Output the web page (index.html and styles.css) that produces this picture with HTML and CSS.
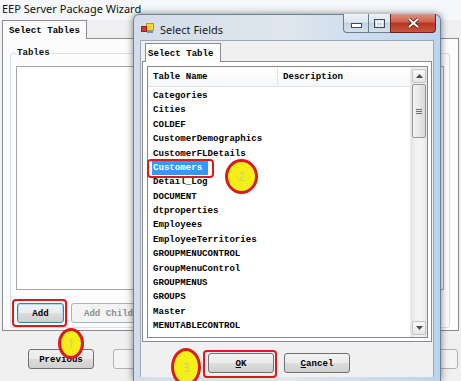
FILE: index.html
```html
<!DOCTYPE html>
<html lang="en">
<head>
    <meta charset="UTF-8">
    <meta name="viewport" content="width=device-width, initial-scale=1.0">
    <title>EEP Server Package Wizard</title>
    <link rel="stylesheet" href="styles.css">
</head>
<body>

    <div class="desktop">

        <!-- wizard window (behind) -->
        <div class="wizard">
            <div class="wizard-title">EEP Server Package Wizard</div>

            <div class="tab-strip wizard-tabs">
                <span class="tab">Select Tables</span>
            </div>
            <div class="tab-page wizard-page">
                <fieldset class="group">
                    <legend>Tables</legend>
                    <div class="listbox"></div>
                    <div class="group-buttons">
                        <button class="btn btn-default btn-add">Add</button>
                        <button class="btn btn-child" disabled>Add Child</button>
                    </div>
                </fieldset>
            </div>

            <div class="wizard-footer">
                <button class="btn btn-nav">Previous</button>
                <button class="btn btn-nav" disabled>Next</button>
                <button class="btn btn-nav btn-finish" disabled>Finish</button>
            </div>
        </div>

        <!-- Select Fields dialog -->
        <div class="dialog">
            <div class="dialog-titlebar">
                <svg class="dialog-icon" width="13" height="10" viewBox="0 0 13 10">
                    <rect x="5.5" y="0.5" width="7" height="7" fill="#f4d63c" stroke="#b89a22"/>
                    <rect x="0.5" y="3.5" width="5" height="5" fill="#d8362c" stroke="#9c2018"/>
                    <rect x="6" y="8" width="6" height="2" fill="#6d90c6"/>
                </svg>
                <span class="dialog-title">Select Fields</span>
                <div class="caption-buttons">
                    <span class="cap cap-min">
                        <svg width="11" height="5" viewBox="0 0 11 5"><rect x="0.5" y="0.5" width="10" height="4" fill="#fff" stroke="#3b4a5e"/></svg>
                    </span>
                    <span class="cap cap-max">
                        <svg width="11" height="9" viewBox="0 0 11 9"><rect x="0.5" y="0.5" width="10" height="8" fill="none" stroke="#3b4a5e"/><rect x="2.5" y="3" width="6" height="4" fill="none" stroke="#fff"/></svg>
                    </span>
                    <span class="cap cap-close">
                        <svg width="13" height="10" viewBox="0 0 13 10"><path d="M2 1 L11 9 M11 1 L2 9" stroke="#3a1a14" stroke-width="3.4"/><path d="M2 1 L11 9 M11 1 L2 9" stroke="#fff" stroke-width="2"/></svg>
                    </span>
                </div>
            </div>

            <div class="dialog-client">
                <div class="tab-strip dialog-tabs">
                    <span class="tab">Select Table</span>
                </div>
                <div class="tab-page dialog-page">
                    <div class="listview">
                        <div class="lv-main">
                            <div class="lv-header">
                                <span class="col col-name">Table Name</span>
                                <span class="col">Description</span>
                            </div>
                            <ul class="lv-rows">
                                <li>Categories</li>
                                <li>Cities</li>
                                <li>COLDEF</li>
                                <li>CustomerDemographics</li>
                                <li>CustomerFLDetails</li>
                                <li><span class="selected">Customers</span></li>
                                <li>Detail_Log</li>
                                <li>DOCUMENT</li>
                                <li>dtproperties</li>
                                <li>Employees</li>
                                <li>EmployeeTerritories</li>
                                <li>GROUPMENUCONTROL</li>
                                <li>GroupMenuControl</li>
                                <li>GROUPMENUS</li>
                                <li>GROUPS</li>
                                <li>Master</li>
                                <li>MENUTABLECONTROL</li>
                            </ul>
                        </div>
                        <div class="scrollbar">
                            <span class="sb-btn">
                                <svg width="7" height="4" viewBox="0 0 7 4"><path d="M0 4 L3.5 0 L7 4 Z" fill="#4d4d4d"/></svg>
                            </span>
                            <span class="sb-thumb"><i></i><i></i><i></i></span>
                            <span class="sb-btn sb-down">
                                <svg width="7" height="4" viewBox="0 0 7 4"><path d="M0 0 L3.5 4 L7 0 Z" fill="#4d4d4d"/></svg>
                            </span>
                        </div>
                    </div>
                </div>
                <div class="dialog-buttons">
                    <button class="btn btn-dlg"><u>O</u>K</button>
                    <button class="btn btn-dlg"><u>C</u>ancel</button>
                </div>
            </div>
        </div>

        <!-- annotations -->
        <span class="mark-box box-customers"></span>
        <span class="mark-box box-add"></span>
        <span class="mark-box box-ok"></span>
        <span class="mark mark-1">1</span>
        <span class="mark mark-2">2</span>
        <span class="mark mark-3">3</span>

    </div>

</body>
</html>
```

FILE: styles.css
```css
* {
    box-sizing: border-box;
}
body {
    margin: 0;
    font-family: "Liberation Mono", "Courier New", monospace;
    font-size: 9.1px;
    font-weight: bold;
    color: #000;
}
.desktop {
    position: relative;
    width: 461px;
    height: 381px;
    overflow: hidden;
    background-color: #f0f0f0;
}

/* wizard window */
.wizard {
    display: flex;
    flex-direction: column;
    height: 381px;
    padding: 0 2px;
}
.wizard-title {
    height: 20px;
    margin: 0 -2px;
    padding-left: 2px;
    font: 11px "Noto Sans", sans-serif;
    line-height: 17px;
    color: #111;
    background-color: #f5f7fa;
}
.tab-strip {
    display: flex;
}
.tab {
    position: relative;
    z-index: 1;
    margin-bottom: -1px;
    border: 1px solid #898c95;
    border-bottom: none;
    background-color: #fcfcfc;
    white-space: nowrap;
}
.wizard-tabs .tab {
    height: 19px;
    padding: 2px 6px 0;
    line-height: 15px;
}
.tab-page {
    border: 1px solid #898c95;
    background-color: #fcfcfc;
}
.wizard-page {
    height: 293px;
    padding: 8px 8px 0 7px;
}
.group {
    margin: 0;
    padding: 0 5px 4px;
    min-width: 0;
    border: 1px solid #d5dfe5;
    border-radius: 3px;
}
.group legend {
    padding: 0 1px;
    line-height: 12px;
    color: #111;
}
.listbox {
    height: 224px;
    margin-top: 7px;
    border: 1px solid #a5a7ad;
    background-color: #fff;
}
.group-buttons {
    display: flex;
    gap: 7px;
    margin-top: 13px;
    padding-left: 1px;
}
.btn {
    height: 20px;
    padding: 0;
    border: 1px solid #707070;
    border-radius: 3px;
    background: linear-gradient(#f2f2f2 0%, #ebebeb 49%, #dddddd 50%, #cfcfcf 100%);
    font: inherit;
    color: #000;
}
.btn:disabled {
    border-color: #adb2b5;
    background: #f4f4f4;
    color: #8e8e8e;
}
.btn-default {
    border-color: #3c7fb1;
    box-shadow: inset 0 0 0 1px #a9dcf6;
}
.btn-add {
    width: 47px;
}
.btn-child {
    width: 75px;
}
.wizard-footer {
    display: flex;
    gap: 19px;
    padding: 18px 1px 0 26px;
}
.btn-nav {
    width: 66px;
}
.btn-finish {
    margin-left: auto;
}

/* dialog */
.dialog {
    position: absolute;
    left: 133px;
    top: 14px;
    width: 308px;
    height: 367px;
    display: flex;
    flex-direction: column;
    padding: 0 6px 4px;
    border: 1px solid #6f8197;
    border-bottom: none;
    border-radius: 6px 6px 0 0;
    background: linear-gradient(to right, #d3dde9 0%, #dfe6ee 50%, #bcd3ee 100%);
    box-shadow: 0 0 7px rgba(0, 0, 0, 0.5);
}
.dialog-titlebar {
    height: 25px;
    display: flex;
    align-items: center;
    margin: 0 -2px 0 0;
}
.dialog-icon {
    margin-left: 1px;
}
.dialog-title {
    margin-left: 6px;
    padding-top: 3px;
    font: 11px "Noto Sans", sans-serif;
    color: #1a1a1a;
}
.caption-buttons {
    display: flex;
    align-self: flex-start;
    margin-left: auto;
    margin-top: -1px;
}
.cap {
    height: 19px;
    display: flex;
    align-items: center;
    justify-content: center;
    border: 1px solid #6b7c92;
    border-top: none;
    background: linear-gradient(#eef2f7 0%, #dde5ee 45%, #c5d1df 50%, #d5e0ec 100%);
}
.cap-min {
    width: 25px;
    border-right: none;
    border-bottom-left-radius: 4px;
    padding-top: 5px;
}
.cap-max {
    width: 22px;
    border-right: none;
}
.cap-close {
    width: 46px;
    border-color: #6e2218;
    border-bottom-right-radius: 4px;
    background: linear-gradient(#df9282 0%, #cf5f4e 45%, #b9331f 50%, #c9553f 100%);
}
.dialog-client {
    flex: 1;
    display: flex;
    flex-direction: column;
    padding: 2px 1px 0;
    border: 1px solid #9aa9bb;
    border-bottom: none;
    background-color: #f0f0f0;
}
.dialog-tabs {
    padding-left: 3px;
}
.dialog-tabs .tab {
    height: 19px;
    padding: 2px 6px 0 2px;
    line-height: 15px;
}
.dialog-page {
    height: 281px;
    padding: 4px 3px 3px 4px;
    background-color: #fff;
}
.listview {
    display: flex;
    height: 100%;
    border: 1px solid #828790;
    background-color: #fff;
}
.lv-main {
    flex: 1;
    overflow: hidden;
}
.lv-header {
    display: flex;
    height: 20px;
    border-bottom: 1px solid #e2e4e7;
    background: linear-gradient(#ffffff, #f6f7f8);
    line-height: 19px;
}
.col {
    padding-left: 5px;
}
.col-name {
    width: 130px;
    border-right: 1px solid #e2e4e7;
}
.lv-rows {
    margin: 0;
    padding: 2px 0 0 5px;
    list-style: none;
}
.lv-rows li {
    height: 14.375px;
    line-height: 14.375px;
    white-space: nowrap;
}
.selected {
    display: inline-block;
    margin-left: -1px;
    padding: 0 6px 0 1px;
    background-color: #3399ff;
    color: #fff;
}
.scrollbar {
    width: 17px;
    display: flex;
    flex-direction: column;
    padding: 2px 1px;
    border-left: 1px solid #e8e8e8;
    background: linear-gradient(to right, #e4e4e4, #f3f3f3 30%, #f3f3f3 70%, #e4e4e4);
}
.sb-btn {
    height: 14px;
    display: flex;
    align-items: center;
    justify-content: center;
    border: 1px solid #c2c2c2;
    border-radius: 2px;
    background: linear-gradient(#fbfbfb, #e6e6e6);
}
.sb-down {
    margin-top: auto;
}
.sb-thumb {
    height: 54px;
    margin-top: 1px;
    display: flex;
    flex-direction: column;
    align-items: center;
    justify-content: center;
    gap: 1px;
    border: 1px solid #979797;
    border-radius: 2px;
    background: linear-gradient(to right, #f4f4f4, #e8e8e8 50%, #d9d9d9);
}
.sb-thumb i {
    width: 6px;
    height: 1px;
    background-color: #6e6e6e;
}
.dialog-buttons {
    display: flex;
    gap: 10px;
    padding: 11px 0 0 66px;
}
.btn-dlg {
    width: 66px;
}
.btn-dlg u {
    text-underline-offset: 1px;
}

/* annotations */
.mark-box {
    position: absolute;
    border: 2px solid #dc1a1e;
    border-radius: 4px;
}
.box-customers {
    left: 147px;
    top: 159px;
    width: 67px;
    height: 19px;
}
.box-add {
    left: 12px;
    top: 299px;
    width: 55px;
    height: 28px;
}
.box-ok {
    left: 203px;
    top: 350px;
    width: 74px;
    height: 28px;
}
.mark {
    position: absolute;
    display: flex;
    align-items: center;
    justify-content: center;
    border: 3px solid #dc1a1e;
    border-radius: 50%;
    background-color: #f4ef17;
    font: 12px "Noto Sans", sans-serif;
    color: #d3cf7a;
}
.mark-1 {
    left: 58px;
    top: 328px;
    width: 26px;
    height: 31px;
}
.mark-2 {
    left: 225px;
    top: 159px;
    width: 33px;
    height: 35px;
}
.mark-3 {
    left: 171px;
    top: 348px;
    width: 30px;
    height: 38px;
}
```
